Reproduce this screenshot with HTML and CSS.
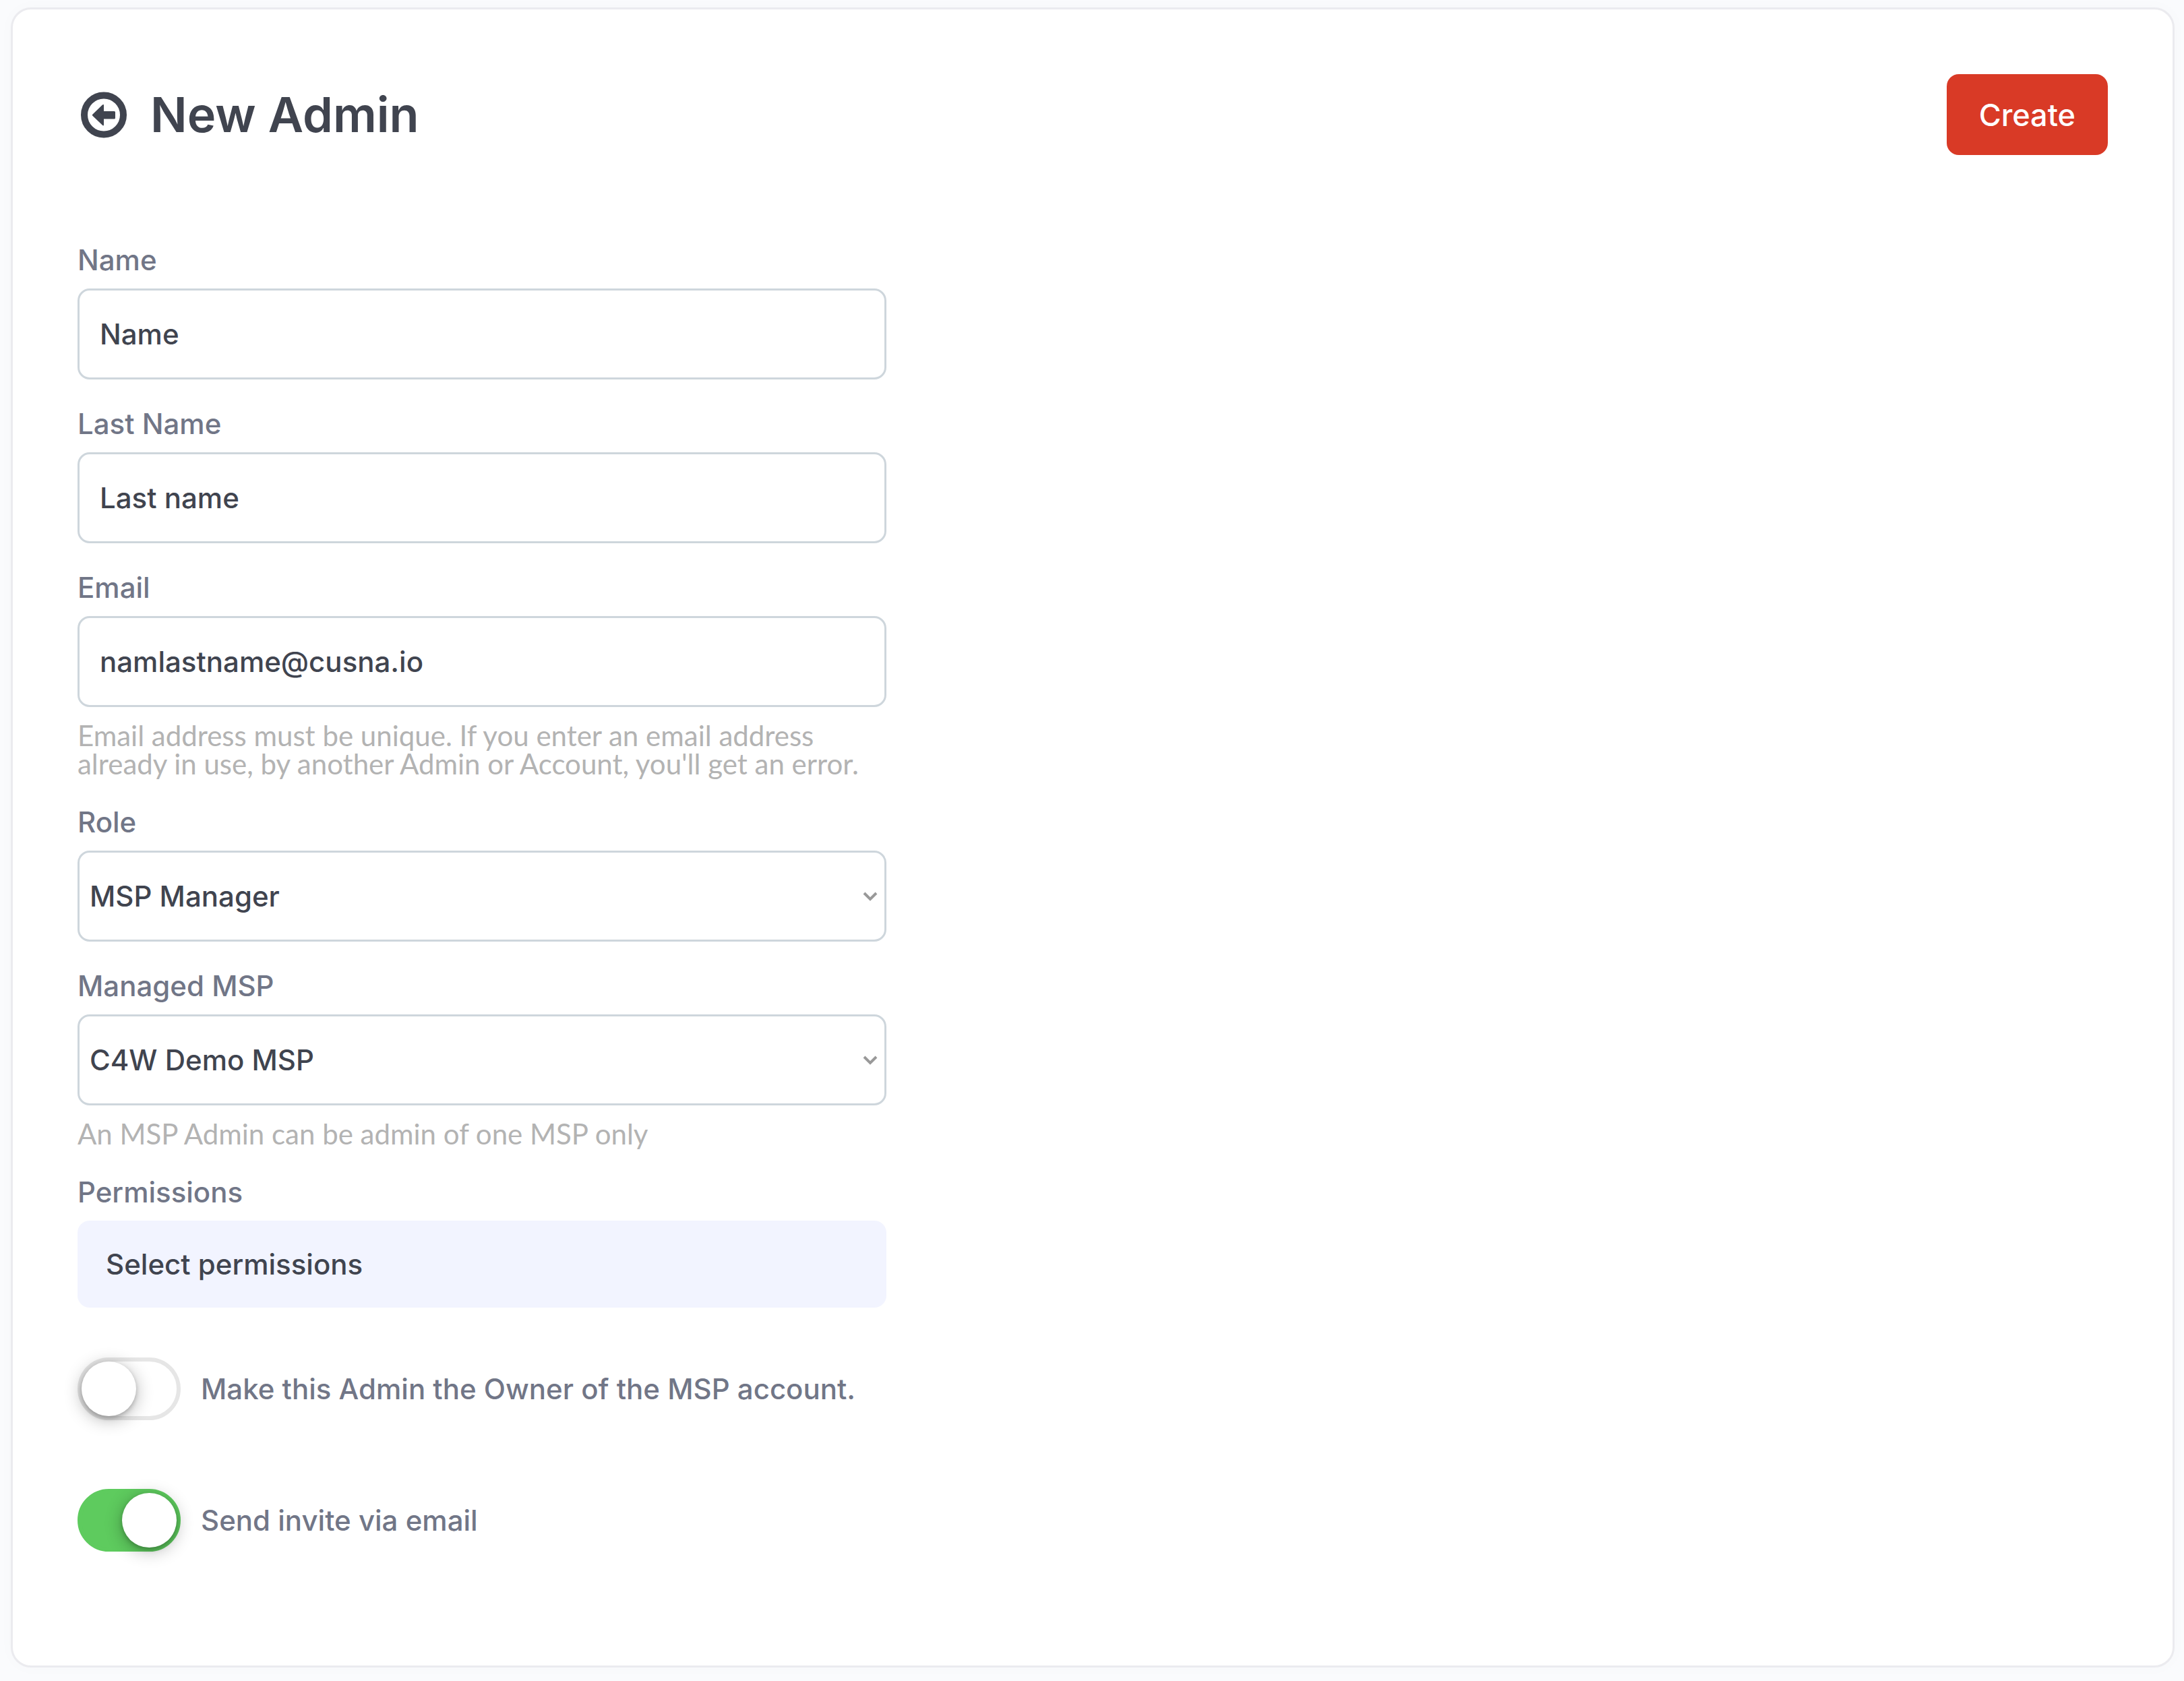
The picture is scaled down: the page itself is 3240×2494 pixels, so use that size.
FILE: index.html
```html
<!DOCTYPE html>
<html lang="en">
<head>
<meta charset="utf-8">
<meta name="viewport" content="width=device-width, initial-scale=1">
<title>New Admin</title>
<link rel="stylesheet" href="styles.css">
</head>
<body>
<main class="card">
  <header class="card-header">
    <a class="back" href="#" aria-label="Back">
      <svg class="back-icon" viewBox="0 0 70 70" aria-hidden="true">
        <circle cx="35" cy="35.500" r="29" fill="none" stroke="currentColor" stroke-width="10"/>
        <path d="M18.3 34.700 33 20.500Q35 19.100 35 21V30H50.500Q52 30 52 31.500V40Q52 41.500 50.500 41.500H35V50Q35 52.300 33 50.800L18.300 36.700Q17.300 35.700 18.300 34.700Z" fill="currentColor"/>
      </svg>
    </a>
    <h1 class="title">New Admin</h1>
    <button class="create" type="submit" form="admin-form">Create</button>
  </header>

  <form class="form" id="admin-form">
    <div class="field">
      <label class="label" for="name">Name</label>
      <input class="control" id="name" type="text" value="Name">
    </div>
    <div class="field">
      <label class="label" for="last-name">Last Name</label>
      <input class="control" id="last-name" type="text" value="Last name">
    </div>
    <div class="field">
      <label class="label" for="email">Email</label>
      <input class="control" id="email" type="email" value="namlastname@cusna.io">
      <p class="hint">Email address must be unique. If you enter an email address already in use, by another Admin or Account, you'll get an error.</p>
    </div>
    <div class="field">
      <label class="label" for="role">Role</label>
      <div class="select-wrap">
        <select class="control select" id="role"><option>MSP Manager</option></select>
        <svg class="chevron" viewBox="0 0 22 14" aria-hidden="true"><path d="M2 2 11 11 20 2" fill="none" stroke="currentColor" stroke-width="4"/></svg>
      </div>
    </div>
    <div class="field">
      <label class="label" for="msp">Managed MSP</label>
      <div class="select-wrap">
        <select class="control select" id="msp"><option>C4W Demo MSP</option></select>
        <svg class="chevron" viewBox="0 0 22 14" aria-hidden="true"><path d="M2 2 11 11 20 2" fill="none" stroke="currentColor" stroke-width="4"/></svg>
      </div>
      <p class="hint">An MSP Admin can be admin of one MSP only</p>
    </div>
    <div class="field">
      <label class="label" for="permissions">Permissions</label>
      <button class="permissions" id="permissions" type="button">Select permissions</button>
    </div>
    <div class="toggles">
      <label class="toggle-row"><input class="toggle" type="checkbox">Make this Admin the Owner of the MSP account.</label>
      <label class="toggle-row"><input class="toggle" type="checkbox" checked>Send invite via email</label>
    </div>
  </form>
</main>
</body>
</html>
```
FILE: styles.css
```css
*,
*::before {
  box-sizing: border-box;
}

body {
  margin: 0;
  padding: 11px 14px 20px 16px;
  background: #fafbfd;
  color: #40444f;
  font-family: Inter, "Liberation Sans", sans-serif;
  font-size: 42px;
  font-weight: 500;
  line-height: 51px;
}

.card {
  padding: 96px 96px 169px;
  border: 3px solid #ebebef;
  border-radius: 30px;
  background: #fff;
  box-shadow: 0 0 24px rgba(20, 30, 60, 0.02);
}

.card-header {
  display: flex;
  align-items: center;
  height: 120px;
  margin-bottom: 130px;
}

.back {
  display: flex;
  margin: 0 34px 0 4px;
  color: inherit;
}

.back-icon {
  width: 70px;
  height: 70px;
}

.title {
  margin: 0;
  font-size: 72px;
  font-weight: 600;
  line-height: 88px;
}

.create {
  height: 120px;
  margin-left: auto;
  padding: 0 48px;
  border: 0;
  border-radius: 18px;
  background: #d93a26;
  color: #fff;
  font: inherit;
  font-size: 45px;
}

.form {
  display: flex;
  flex-direction: column;
  gap: 40px;
  max-width: 1200px;
}

.field {
  display: flex;
  flex-direction: column;
}

.label {
  margin-bottom: 17px;
  color: #717687;
}

.control {
  width: 100%;
  height: 135px;
  padding: 0 30px;
  border: 3px solid #ced6dc;
  border-radius: 18px;
  background: #fff;
  color: inherit;
  font: inherit;
}

.select-wrap {
  position: relative;
}

.select {
  display: block;
  padding: 0 48px 0 15px;
  appearance: none;
}

.chevron {
  position: absolute;
  top: 61px;
  right: 13px;
  width: 22px;
  height: 14px;
  color: #999;
  pointer-events: none;
}

.hint {
  margin: 21px 0 0;
  color: #b3b3b3;
  font-family: Lato, sans-serif;
  font-weight: 400;
  line-height: 42px;
}

.permissions {
  height: 129px;
  padding: 0 42px;
  border: 0;
  border-radius: 18px;
  background: #f2f4ff;
  color: inherit;
  font: inherit;
  text-align: left;
}

.toggles {
  display: flex;
  flex-direction: column;
  gap: 102px;
  margin-top: 34px;
}

.toggle-row {
  display: flex;
  align-items: center;
  gap: 30px;
  color: #717687;
}

.toggle {
  flex: none;
  width: 153px;
  height: 93px;
  margin: 0;
  border: 6px solid #e6e6e6;
  border-radius: 47px;
  background: #fff;
  appearance: none;
}

.toggle::before {
  content: "";
  display: block;
  width: 81px;
  height: 81px;
  border-radius: 50%;
  background: #fff;
  box-shadow: 0 3px 6px rgba(0, 0, 0, 0.2), 0 5px 26px rgba(0, 0, 0, 0.3);
}

.toggle:checked {
  border-color: #5ecb5e;
  background: #5ecb5e;
}

.toggle:checked::before {
  margin-left: auto;
}
```
